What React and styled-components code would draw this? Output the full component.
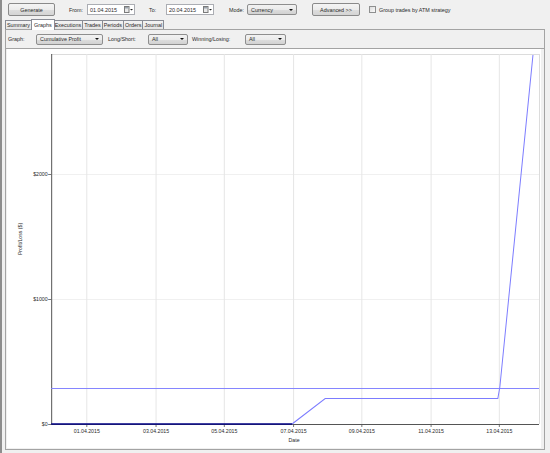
import styled, { createGlobalStyle } from "styled-components";

const GlobalStyle = createGlobalStyle`
  html, body {
    margin: 0;
    padding: 0;
    background: #f0f0f0;
  }
  body {
    font-family: "Liberation Sans", Arial, sans-serif;
  }
`;

const Window = styled.div`
  width: 550px;
  height: 453px;
  box-sizing: border-box;
  display: flex;
  flex-direction: column;
  background: #f0f0f0;
  border-left: 2px solid #8d8d8d;
  font-size: 5.4px;
  color: #2a2a2a;
  overflow: hidden;
`;

const Toolbar = styled.div`
  height: 19px;
  flex-shrink: 0;
  display: flex;
  align-items: center;
  padding-left: 6px;
`;

const Button = styled.div`
  box-sizing: border-box;
  width: ${(p) => p.$w}px;
  height: 13px;
  margin-left: ${(p) => p.$ml || 0}px;
  display: flex;
  align-items: center;
  justify-content: center;
  border: 1px solid #8a8a8a;
  border-radius: 2px;
  background: linear-gradient(#f4f4f4, #ececec 50%, #dedede 51%, #d4d4d4);
`;

const Label = styled.span`
  display: inline-block;
  width: ${(p) => p.$w}px;
  margin-left: ${(p) => p.$ml || 0}px;
  white-space: nowrap;
`;

const DateBox = styled.div`
  box-sizing: border-box;
  width: 48px;
  height: 11px;
  display: flex;
  align-items: center;
  justify-content: space-between;
  padding: 0 1px 0 2px;
  background: #fff;
  border: 1px solid #abadb3;
`;

const Select = styled.div`
  box-sizing: border-box;
  width: ${(p) => p.$w}px;
  height: 11px;
  display: flex;
  align-items: center;
  justify-content: space-between;
  padding: 0 3px 0 3px;
  border: 1px solid #8e8e8e;
  border-radius: 2px;
  background: linear-gradient(#f2f2f2, #ebebeb 50%, #dddddd 51%, #d2d2d2);
`;

const Arrow = styled.span`
  width: 0;
  height: 0;
  border-left: 2px solid transparent;
  border-right: 2px solid transparent;
  border-top: 2px solid #111;
`;

const Check = styled.div`
  box-sizing: border-box;
  width: 7px;
  height: 7px;
  margin-left: ${(p) => p.$ml || 0}px;
  margin-right: 3px;
  border: 1px solid #8e8f8f;
  background: linear-gradient(135deg, #dcdcdc, #fbfbfb);
`;

const TabStrip = styled.div`
  height: 10px;
  flex-shrink: 0;
  display: flex;
  align-items: flex-end;
  padding-left: 3px;
`;

const Tab = styled.div`
  box-sizing: border-box;
  position: relative;
  z-index: ${(p) => (p.$active ? 2 : 1)};
  height: ${(p) => (p.$active ? 11 : 9)}px;
  margin-bottom: ${(p) => (p.$active ? -1 : 0)}px;
  margin-left: ${(p) => (p.$active ? -1 : 0)}px;
  margin-right: ${(p) => (p.$active ? -1 : 0)}px;
  padding: 0 ${(p) => (p.$active ? 2 : 1)}px;
  display: flex;
  align-items: center;
  border: 1px solid #898c95;
  border-bottom: none;
  border-left-width: ${(p) => (p.$first || p.$active ? 1 : 0)}px;
  background: ${(p) =>
    p.$active ? "#fff" : "linear-gradient(#f3f3f3, #e4e4e4)"};
`;

const TabPage = styled.div`
  flex: 1;
  display: flex;
  flex-direction: column;
  margin: 0 5px 3px 3px;
  border: 1px solid #a3a3a3;
  min-height: 0;
`;

const GraphBar = styled.div`
  height: 18px;
  flex-shrink: 0;
  display: flex;
  align-items: center;
  padding-left: 2px;
  border-bottom: 1px solid #a3a3a3;
  background: #f0f0f0;
`;

const ChartPanel = styled.div`
  flex: 1;
  margin: 0 3px 1px 1px;
  background: #fff;
  min-height: 0;
`;

const CalendarIcon = () => (
  <svg width="9" height="7" viewBox="0 0 9 7">
    <rect x="0.5" y="0.5" width="4.5" height="6" fill="#e8e8e8" stroke="#7a7a7a" />
    <rect x="1" y="1" width="3.5" height="1.5" fill="#9aa3ad" />
    <path d="M6 3 L9 3 L7.5 4.6 Z" fill="#222" />
  </svg>
);

const tabs = ["Summary", "Graphs", "Executions", "Trades", "Periods", "Orders", "Journal"];
const dates = ["01.04.2015", "03.04.2015", "05.04.2015", "07.04.2015", "09.04.2015", "11.04.2015", "13.04.2015"];

const AX = 51;
const BOTTOM = 424;
const TOP = 54;
const RIGHT = 537;

const Chart = () => (
  <svg width="100%" height="100%" viewBox="7 49 532 399" preserveAspectRatio="none">
    <g fontFamily="'Liberation Sans', Arial, sans-serif" fontSize="5.2" fill="#2a2a2a">
      {/* grid */}
      <line x1={AX} y1={TOP + 0.5} x2={RIGHT} y2={TOP + 0.5} stroke="#dcdcdc" />
      <line x1={RIGHT + 0.5} y1={TOP} x2={RIGHT + 0.5} y2={BOTTOM} stroke="#dcdcdc" />
      {[174, 299].map((y) => (
        <line key={y} x1={AX} y1={y + 0.5} x2={RIGHT} y2={y + 0.5} stroke="#f0f0f0" />
      ))}
      {dates.map((d, i) => {
        const x = Math.round(86 + i * 68.5) + 0.5;
        return (
          <g key={d}>
            <line x1={x} y1={TOP} x2={x} y2={BOTTOM} stroke="#e6e6e6" />
            <line x1={x} y1={BOTTOM} x2={x} y2={BOTTOM + 3} stroke="#777" />
            <text x={x} y={433} textAnchor="middle">{d}</text>
          </g>
        );
      })}
      {[
        ["$0", 424],
        ["$1000", 299],
        ["$2000", 174],
      ].map(([t, y]) => (
        <g key={t}>
          <line x1={AX - 3} y1={y + 0.5} x2={AX} y2={y + 0.5} stroke="#777" />
          <text x={AX - 3.5} y={y + 2} textAnchor="end">{t}</text>
        </g>
      ))}
      {/* axes */}
      <line x1={AX + 0.5} y1={TOP} x2={AX + 0.5} y2={BOTTOM + 1} stroke="#555" />
      <line x1={AX} y1={BOTTOM + 0.5} x2={RIGHT} y2={BOTTOM + 0.5} stroke="#555" />
      <text x={293} y={442} textAnchor="middle">Date</text>
      <text x={0} y={0} textAnchor="middle" transform="translate(22 239) rotate(-90)">
        Profit/Loss ($)
      </text>
      {/* series */}
      <line x1={AX} y1={388.5} x2={RIGHT} y2={388.5} stroke="#8585ff" strokeWidth="1" />
      <polyline
        points="291,424 324,398.5 496,398.5 498,387 531,55"
        fill="none"
        stroke="#7c7cff"
        strokeWidth="1"
      />
      <line x1={AX} y1={424} x2={291} y2={424} stroke="#000085" strokeWidth="1.6" />
    </g>
  </svg>
);

export default function App() {
  return (
    <>
      <GlobalStyle />
      <Window>
        <Toolbar>
          <Button $w={47}>Generate</Button>
          <Label $w={18} $ml={14}>From:</Label>
          <DateBox>
            <span>01.04.2015</span>
            <CalendarIcon />
          </DateBox>
          <Label $w={17} $ml={14}>To:</Label>
          <DateBox>
            <span>20.04.2015</span>
            <CalendarIcon />
          </DateBox>
          <Label $w={18} $ml={15}>Mode:</Label>
          <Select $w={50}>
            <span>Currency</span>
            <Arrow />
          </Select>
          <Button $w={48} $ml={15}>Advanced &gt;&gt;</Button>
          <Check $ml={9} />
          <span>Group trades by ATM strategy</span>
        </Toolbar>
        <TabStrip>
          {tabs.map((t, i) => (
            <Tab key={t} $first={i === 0} $active={t === "Graphs"}>
              {t}
            </Tab>
          ))}
        </TabStrip>
        <TabPage>
          <GraphBar>
            <Label $w={28}>Graph:</Label>
            <Select $w={67}>
              <span>Cumulative Profit</span>
              <Arrow />
            </Select>
            <Label $w={40} $ml={5}>Long/Short:</Label>
            <Select $w={40}>
              <span>All</span>
              <Arrow />
            </Select>
            <Label $w={53} $ml={4}>Winning/Losing:</Label>
            <Select $w={41}>
              <span>All</span>
              <Arrow />
            </Select>
          </GraphBar>
          <ChartPanel>
            <Chart />
          </ChartPanel>
        </TabPage>
      </Window>
    </>
  );
}
